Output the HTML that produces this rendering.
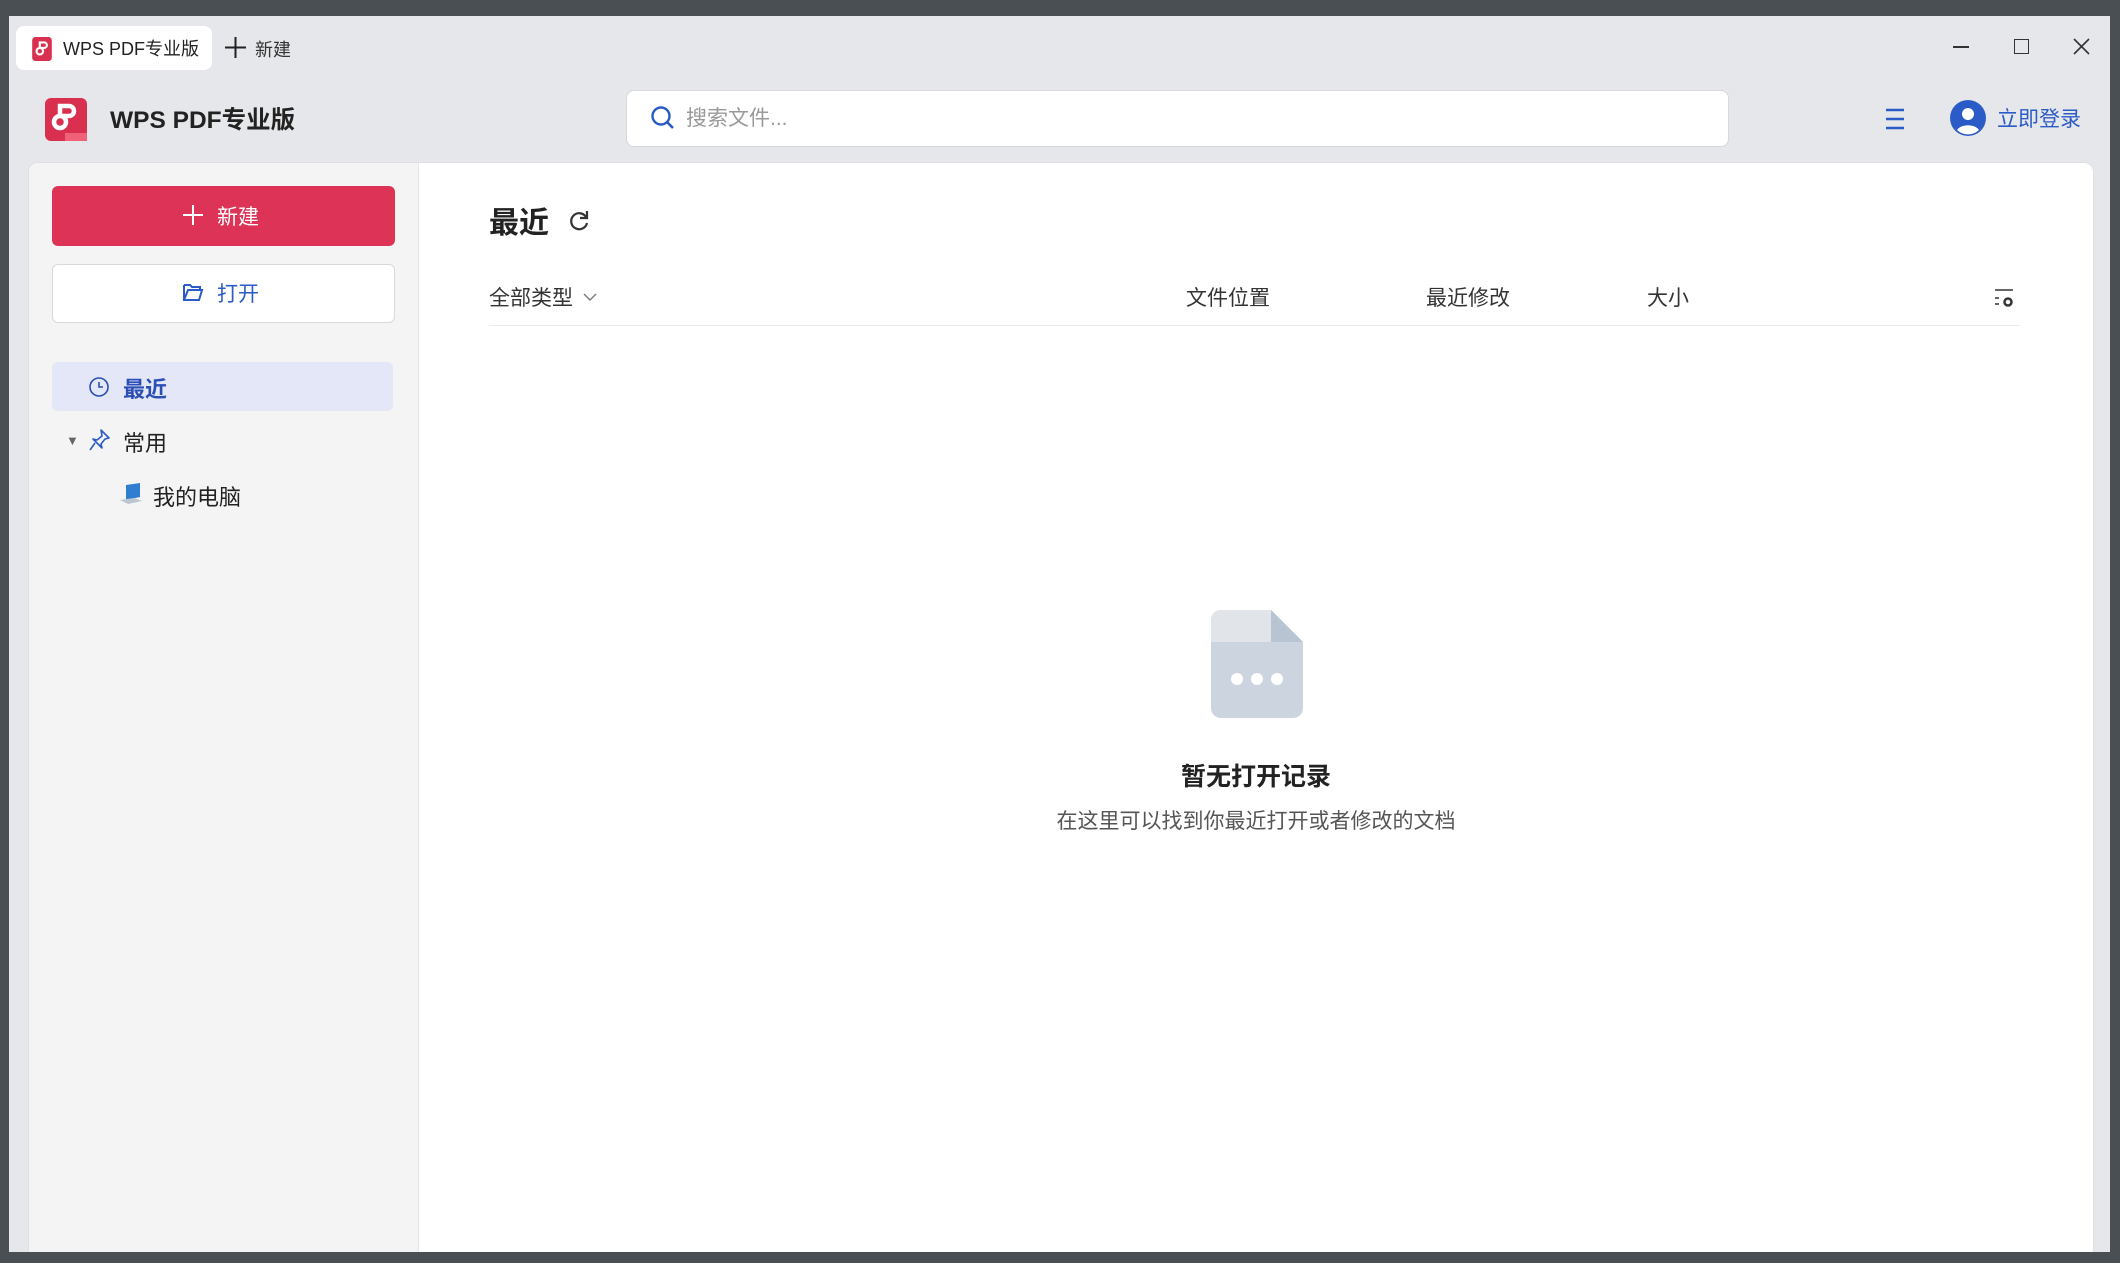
<!DOCTYPE html>
<html><head><meta charset="utf-8"><style>
*{margin:0;padding:0;box-sizing:border-box}
body{width:2120px;height:1263px;background:#4a4f53;position:relative;overflow:hidden;font-family:"Liberation Sans","Noto Sans CJK SC",sans-serif;color:#222}
.win{position:absolute;left:9px;top:16px;width:2101px;height:1236px;background:#e6e7ea}
.a{position:absolute;white-space:nowrap}
</style></head><body>
<div class="win"></div>
<!-- tab -->
<div class="a" style="left:16px;top:26px;width:196px;height:44px;background:#fff;border-radius:8px"></div>
<svg class="a" style="left:31px;top:37px" width="22" height="24" viewBox="0 0 18 22"><rect width="18" height="22" rx="3" fill="#d9304f"/><circle cx="7" cy="13" r="3" fill="none" stroke="#fff" stroke-width="2"/><path d="M7 10V5h4a2.5 2.5 0 0 1 0 5H7" fill="none" stroke="#fff" stroke-width="2"/></svg>
<div class="a" style="left:63px;top:35px;font-size:18px;color:#222">WPS PDF专业版</div>
<svg class="a" style="left:225px;top:37px" width="21" height="21"><path d="M10.5 0v21M0 10.5h21" stroke="#222" stroke-width="2"/></svg>
<div class="a" style="left:255px;top:36px;font-size:18px;color:#333">新建</div>
<!-- window controls -->
<div class="a" style="left:1953px;top:46px;width:16px;height:2px;background:#333"></div>
<div class="a" style="left:2014px;top:39px;width:15px;height:15px;border:1.6px solid #333"></div>
<svg class="a" style="left:2073px;top:38px" width="17" height="17"><path d="M1 1L16 16M16 1L1 16" stroke="#333" stroke-width="1.6"/></svg>
<!-- header -->
<svg class="a" style="left:45px;top:98px" width="42" height="43" viewBox="0 0 42 43"><rect width="42" height="43" rx="6" fill="#d9304f"/><rect x="20" y="35" width="22" height="8" fill="#f06078"/><circle cx="15" cy="24" r="6" fill="none" stroke="#fff" stroke-width="4.5"/><path d="M15 18V8h9a5 5 0 0 1 0 10h-9" fill="none" stroke="#fff" stroke-width="4.5"/></svg>
<div class="a" style="left:110px;top:101px;font-size:24.5px;font-weight:bold;color:#222">WPS PDF专业版</div>
<div class="a" style="left:626px;top:90px;width:1103px;height:57px;background:#fff;border:1px solid #d6d8dc;border-radius:8px"></div>
<svg class="a" style="left:650px;top:105px" width="26" height="26"><circle cx="11" cy="11" r="8.5" fill="none" stroke="#2b5bc6" stroke-width="2.4"/><path d="M17 17l6 6" stroke="#2b5bc6" stroke-width="2.6"/></svg>
<div class="a" style="left:686px;top:102px;font-size:21px;color:#999">搜索文件...</div>
<svg class="a" style="left:1885px;top:108px" width="20" height="22"><path d="M1 2h18M1 11h18M1 20h18" stroke="#2b5bc6" stroke-width="2.4"/></svg>
<svg class="a" style="left:1950px;top:100px" width="36" height="36" viewBox="0 0 36 36"><circle cx="18" cy="18" r="18" fill="#2b5bc6"/><circle cx="18" cy="14" r="6" fill="#fff"/><path d="M7 30a12 8 0 0 1 22 0a16 16 0 0 1-22 0z" fill="#fff"/></svg>
<div class="a" style="left:1997px;top:103px;font-size:21px;color:#2b5bc6">立即登录</div>
<!-- content -->
<div class="a" style="left:28px;top:162px;width:2066px;height:1090px;background:#fff;border-radius:10px 10px 0 0;border:1px solid #dfe0e3;border-bottom:none;overflow:hidden"><div style="width:390px;height:100%;background:#f4f4f5;border-right:1px solid #e6e6e8"></div></div>
<div class="a" style="left:52px;top:186px;width:343px;height:60px;background:#dc3356;border-radius:6px"></div>
<svg class="a" style="left:183px;top:205px" width="20" height="20"><path d="M10 0v20M0 10h20" stroke="#fff" stroke-width="2"/></svg>
<div class="a" style="left:217px;top:201px;font-size:21px;color:#fff">新建</div>
<div class="a" style="left:52px;top:264px;width:343px;height:59px;background:#fff;border:1px solid #d8d9dc;border-radius:6px"></div>
<svg class="a" style="left:182px;top:281px" width="22" height="22"><path d="M2 4h6l2 2h8v3M2 4v15h15l3-10H6L2 19" fill="none" stroke="#2b5bc6" stroke-width="2"/></svg>
<div class="a" style="left:217px;top:278px;font-size:21px;color:#2b5bc6">打开</div>
<div class="a" style="left:52px;top:362px;width:341px;height:49px;background:#e3e7f7;border-radius:6px"></div>
<svg class="a" style="left:88px;top:376px" width="22" height="22"><circle cx="11" cy="11" r="9" fill="none" stroke="#2b4fb5" stroke-width="1.6"/><path d="M11 6v5h4" fill="none" stroke="#2b4fb5" stroke-width="1.6"/></svg>
<div class="a" style="left:123px;top:372px;font-size:22px;font-weight:bold;color:#2b4fb5">最近</div>
<div class="a" style="left:66px;top:433px;font-size:13px;color:#666">▼</div>
<svg class="a" style="left:88px;top:428px" width="24" height="24"><path d="M13 2l8 8-4 1-4 5 1 4-9-9 4 1 5-4z M7 15l-5 7" fill="none" stroke="#2b5bc6" stroke-width="1.6" stroke-linejoin="round"/></svg>
<div class="a" style="left:123px;top:426px;font-size:22px;color:#222">常用</div>
<svg class="a" style="left:118px;top:482px" width="26" height="24"><path d="M8 3l14-2v14l-14 3z" fill="#2f7fd1"/><path d="M2 18l14-2 8 3-14 3z" fill="#bcc6d2"/></svg>
<div class="a" style="left:153px;top:480px;font-size:22px;color:#222">我的电脑</div>
<!-- main -->
<div class="a" style="left:489px;top:198px;font-size:30px;font-weight:bold;color:#222">最近</div>
<svg class="a" style="left:567px;top:209px" width="24" height="24"><path d="M19 8A8 8 0 1 0 20 14" fill="none" stroke="#333" stroke-width="2.2"/><path d="M20 2v7h-7" fill="none" stroke="#333" stroke-width="2.2"/></svg>
<div class="a" style="left:489px;top:282px;font-size:21px;color:#333">全部类型</div>
<svg class="a" style="left:583px;top:292px" width="14" height="10"><path d="M1 2l6 6 6-6" fill="none" stroke="#777" stroke-width="1.4"/></svg>
<div class="a" style="left:1186px;top:282px;font-size:21px;color:#333">文件位置</div>
<div class="a" style="left:1426px;top:282px;font-size:21px;color:#333">最近修改</div>
<div class="a" style="left:1647px;top:282px;font-size:21px;color:#333">大小</div>
<svg class="a" style="left:1994px;top:288px" width="22" height="20"><path d="M1 2h18M1 10h4M1 16h4" stroke="#333" stroke-width="1.6"/><circle cx="14" cy="14" r="3.5" fill="none" stroke="#333" stroke-width="2.5"/></svg>
<div class="a" style="left:489px;top:325px;width:1531px;height:1px;background:#ebebed"></div>
<svg class="a" style="left:1211px;top:610px" width="92" height="108" viewBox="0 0 92 108"><path d="M10 0h50l32 32v66a10 10 0 0 1-10 10H10A10 10 0 0 1 0 98V10A10 10 0 0 1 10 0z" fill="#ccd4df"/><path d="M10 0h50v32H0V10A10 10 0 0 1 10 0z" fill="#e1e4e9"/><path d="M60 0l32 32H60z" fill="#b9c4d3"/><circle cx="26" cy="69" r="6" fill="#fff"/><circle cx="46" cy="69" r="6" fill="#fff"/><circle cx="66" cy="69" r="6" fill="#fff"/></svg>
<div class="a" style="left:1156px;top:757px;width:200px;text-align:center;font-size:25px;font-weight:bold;color:#222">暂无打开记录</div>
<div class="a" style="left:1006px;top:805px;width:500px;text-align:center;font-size:21px;color:#555">在这里可以找到你最近打开或者修改的文档</div>
</body></html>
